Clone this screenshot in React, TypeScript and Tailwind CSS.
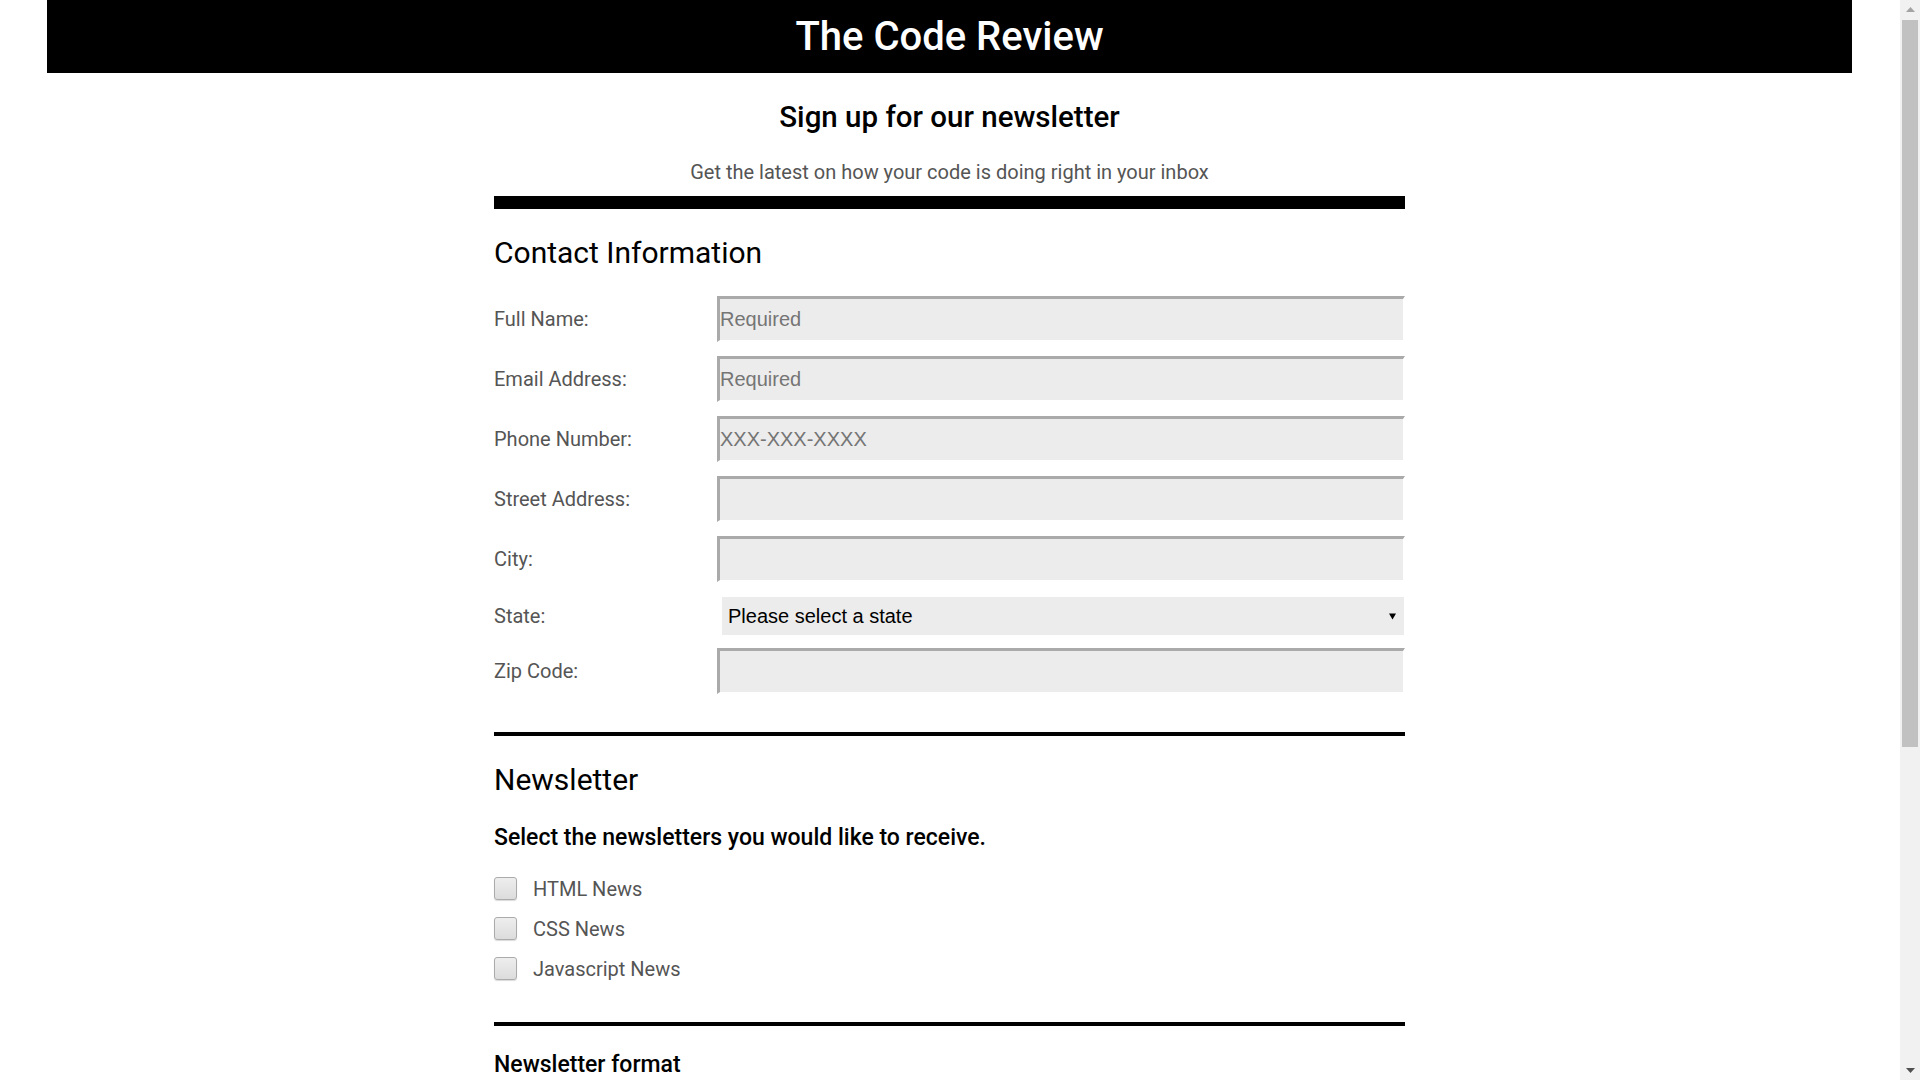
import React from "react";

const inputCls =
  "block w-[688px] h-[46px] bg-[#ececec] border-t-[3px] border-l-[3px] border-r-2 border-b-2 border-t-[#aaa] border-l-[#aaa] border-r-white border-b-white p-0 text-[20px] text-black font-['Liberation_Sans',Arial,sans-serif] placeholder:text-[#757575] outline-none";

function Field({ label, placeholder, className = "" }: { label: string; placeholder?: string; className?: string }) {
  return (
    <div className={"flex items-center " + className}>
      <label className="w-[223px] shrink-0 text-[20px] leading-[24px] text-[#555]">{label}</label>
      <input className={inputCls} placeholder={placeholder} />
    </div>
  );
}

function Box({ label, round = false }: { label: string; round?: boolean }) {
  return (
    <div className="flex items-center h-[23px]">
      <span
        className={
          "block w-[23px] h-[23px] border border-[#ababab] bg-gradient-to-b from-[#eeeeee] to-[#dcdcdc] shadow-[0_1px_1px_rgba(0,0,0,0.15)] " +
          (round ? "rounded-full" : "rounded-[3px]")
        }
      />
      <span className="ml-[16px] text-[20px] leading-[24px] text-[#555]">{label}</span>
    </div>
  );
}

function FakeScrollbar() {
  return (
    <div className="fixed top-0 right-0 w-[20px] h-screen bg-[#f1f1f1] flex flex-col items-center">
      <div className="h-[20px] w-full flex items-center justify-center">
        <svg width="9" height="6" viewBox="0 0 9 6">
          <polygon points="4.5,0 9,5 0,5" fill="#a3a3a3" />
        </svg>
      </div>
      <div className="w-[16px] h-[727px] bg-[#c1c1c1]" />
      <div className="flex-1" />
      <div className="h-[20px] w-full flex items-center justify-center">
        <svg width="9" height="6" viewBox="0 0 9 6">
          <polygon points="0,1 9,1 4.5,6" fill="#505050" />
        </svg>
      </div>
    </div>
  );
}

export default function App() {
  return (
    <div className="min-h-screen bg-white font-['Roboto','Liberation_Sans',sans-serif]">
      <div className="mr-[21px] pb-[77px]">
        <header className="mx-auto w-[1805px] h-[73px] bg-black flex items-center justify-center">
          <h1 className="text-white text-[40px] leading-[48px] font-medium">The Code Review</h1>
        </header>

        <main className="mx-auto w-[911px]">
          <h2 className="mt-[27px] text-center text-[29.5px] leading-[34px] font-medium text-black">
            Sign up for our newsletter
          </h2>
          <p className="mt-[26px] text-center text-[20px] leading-[24px] text-[#555]">
            Get the latest on how your code is doing right in your inbox
          </p>
          <div className="mt-[12px] h-[13px] bg-black" />

          <section>
            <h2 className="mt-[26px] text-[30px] leading-[36px] text-black">Contact Information</h2>
            <div className="mt-[25px] flex flex-col gap-[14px]">
              <Field label="Full Name:" placeholder="Required" />
              <Field label="Email Address:" placeholder="Required" />
              <Field label="Phone Number:" placeholder="XXX-XXX-XXXX" />
              <Field label="Street Address:" />
              <Field label="City:" />
            </div>
            <div className="mt-[15px] flex items-center h-[38px]">
              <label className="w-[223px] shrink-0 text-[20px] leading-[24px] text-[#555]">State:</label>
              <div className="ml-[5px] w-[682px] h-[38px] bg-[#ececec] flex items-center justify-between pl-[6px] pr-[8px]">
                <span className="text-[20px] text-black font-['Liberation_Sans',Arial,sans-serif]">
                  Please select a state
                </span>
                <svg width="7" height="7" viewBox="0 0 7 7">
                  <polygon points="0,0.5 7,0.5 3.5,6.5" fill="#000" />
                </svg>
              </div>
            </div>
            <Field label="Zip Code:" className="mt-[13px]" />
          </section>

          <div className="mt-[38px] h-[4px] bg-black" />

          <section>
            <h2 className="mt-[26px] text-[30px] leading-[36px] text-black">Newsletter</h2>
            <h3 className="mt-[27px] text-[23px] leading-[26px] font-medium text-black">
              Select the newsletters you would like to receive.
            </h3>
            <div className="mt-[26px] flex flex-col gap-[17px]">
              <Box label="HTML News" />
              <Box label="CSS News" />
              <Box label="Javascript News" />
            </div>
          </section>

          <div className="mt-[42px] h-[4px] bg-black" />

          <section>
            <h3 className="mt-[26px] text-[23px] leading-[26px] font-medium text-black">Newsletter format</h3>
            <div className="mt-[26px] flex flex-col gap-[17px]">
              <Box label="HTML" round />
              <Box label="Plain text" round />
            </div>
          </section>

          <div className="mt-[42px] h-[4px] bg-black" />

          <section>
            <h3 className="mt-[25px] text-[23px] leading-[26px] font-medium text-black">
              Other topics you'd like to hear about
            </h3>
            <textarea className="mt-[26px] block w-full h-[110px] bg-[#ececec] border-t-[3px] border-l-[3px] border-t-[#aaa] border-l-[#aaa] outline-none resize-none" />
            <button className="mt-[30px] h-[45px] px-[24px] bg-black text-white text-[20px] font-medium">
              Sign Up
            </button>
          </section>
        </main>
      </div>
      <FakeScrollbar />
    </div>
  );
}
